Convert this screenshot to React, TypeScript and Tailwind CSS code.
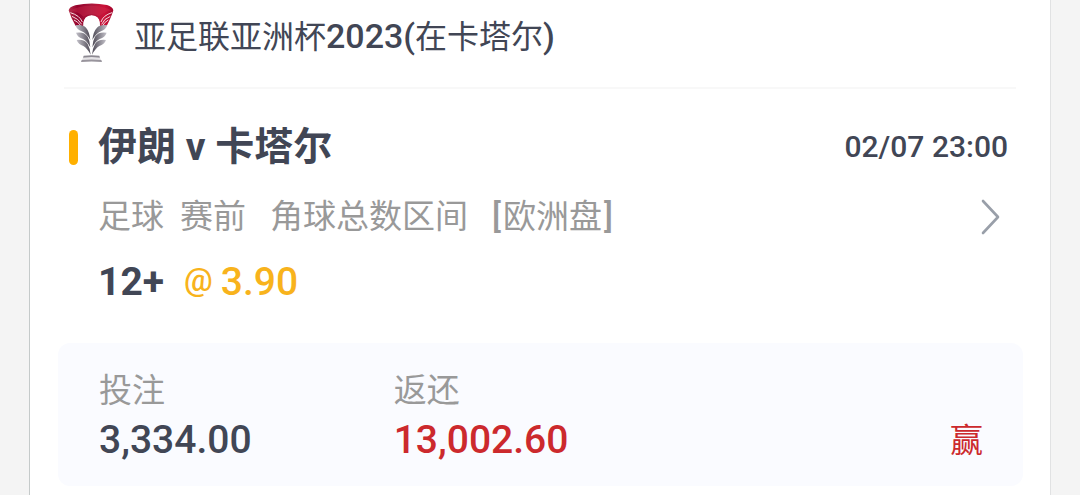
import { ReactNode } from "react";

function TrophyIcon() {
  return (
    <svg viewBox="39 9 138 180" className="h-15 w-[46px] shrink-0" role="img" aria-label="亚洲杯">
      <defs>
        <linearGradient id="bowl" x1="0" x2="1" y1="0" y2="0">
          <stop offset="0" stopColor="#b5304c" />
          <stop offset="0.2" stopColor="#94002b" />
          <stop offset="0.5" stopColor="#a8193c" />
          <stop offset="0.8" stopColor="#cb1238" />
          <stop offset="1" stopColor="#a3052c" />
        </linearGradient>
        <linearGradient id="feather" x1="0" x2="1" y1="0" y2="0">
          <stop offset="0" stopColor="#c4c2ca" />
          <stop offset="1" stopColor="#4d4955" />
        </linearGradient>
        <linearGradient id="featherRight" x1="1" x2="0" y1="0" y2="0">
          <stop offset="0" stopColor="#c4c2ca" />
          <stop offset="1" stopColor="#4d4955" />
        </linearGradient>
      </defs>
      <path
        d="M41 31 Q43 21 61 16 Q108 5 156 15 Q173 20 175 31 Q169 51 155 78 L135 84 Q138 50 110 47 Q81 50 85 84 L62 78 Q48 55 41 31Z"
        fill="url(#bowl)"
      />
      <path d="M47 31 Q69 17 108 17 Q147 17 169 31 Q144 38 132 49 Q121 42 109 42 Q96 42 86 50 Q71 37 47 31Z" fill="#cf2c4e" opacity="0.4" />
      <path d="M46 38 Q74 46 82 66 M51 49 Q71 56 80 73 M57 60 Q69 65 78 78" fill="none" stroke="#f4d7dd" strokeWidth="3" />
      <path d="M171 38 Q144 46 138 66 M166 49 Q147 56 140 73 M160 60 Q150 65 142 78" fill="none" stroke="#f4d7dd" strokeWidth="3" />
      <path d="M110 46 Q134 48 134 70 Q132 86 118 98 L114 160 H106 L102 98 Q88 86 86 70 Q86 48 110 46Z" fill="#fff" />
      <g fill="url(#feather)">
        <path d="M61 76 Q84 73 93 83 Q103 94 106 120 Q95 100 80 94 Q66 89 61 76Z" />
        <path d="M63 98 Q88 94 98 110 Q105 122 106 142 Q96 123 84 117 Q68 112 63 98Z" />
        <path d="M65 120 Q88 117 98 132 Q105 145 107 164 Q96 144 85 138 Q70 134 65 120Z" />
      </g>
      <g fill="url(#featherRight)">
        <path d="M157 76 Q135 73 126 83 Q115 94 112 120 Q123 100 138 94 Q152 89 157 76Z" />
        <path d="M155 98 Q130 94 120 110 Q113 122 112 142 Q122 123 134 117 Q150 112 155 98Z" />
        <path d="M153 120 Q130 117 120 132 Q113 145 111 164 Q122 144 133 138 Q148 134 153 120Z" />
      </g>
      <path d="M86 167 Q110 164 133 167 L135 173 Q110 170 84 173Z" fill="#8d8992" />
      <path d="M84 174 L135 174 L139 181 H80Z" fill="#e5e3e6" />
      <path d="M80 180 Q110 177 139 180 L141 186 Q110 183 78 186Z" fill="#98949c" />
    </svg>
  );
}

function Figure({ label, children }: { label: string; children: ReactNode }) {
  return (
    <div>
      <dt className="text-[33px] leading-12 text-[#999999]">{label}</dt>
      <dd className="text-[39px] leading-[50px] font-medium">{children}</dd>
    </div>
  );
}

export default function App() {
  return (
    <main className="min-h-screen bg-[#f4f4f4] px-[29px] font-[Roboto,'Noto_Sans_CJK_SC',sans-serif] text-[#414655]">
      <article className="min-h-screen border-x border-l-[#c5caca] border-r-[#e1e2e3] bg-white px-7 pb-2">
        <header className="mx-1.5 flex items-center gap-5 border-b-2 border-[#f8f8f8] pt-[3px] pb-6 pl-1">
          <TrophyIcon />
          <h1 className="pt-1.5 text-[32px] leading-12">
            亚足联亚洲杯<span className="text-[34px] font-medium">2023(</span>在卡塔尔<span className="text-[34px] font-medium">)</span>
          </h1>
        </header>

        <section className="pt-[33px] pr-2.5 pl-[11px]">
          <div className="flex items-center">
            <span className="h-[35px] w-[9px] rounded-full bg-[#ffb000]" />
            <h2 className="ml-5 text-[39px] leading-[50px] font-bold">伊朗 v 卡塔尔</h2>
            <time className="mr-1 ml-auto text-[30px] leading-[50px] font-medium" dateTime="02-07T23:00">
              02/07 23:00
            </time>
          </div>
          <div className="mt-[21px] flex items-center pl-[29px] text-[33px] leading-12 text-[#999999]">
            <span>足球</span>
            <span className="ml-4">赛前</span>
            <span className="ml-6">角球总数区间</span>
            <span className="ml-6 flex gap-0.5">
              <span className="font-medium">[</span>欧洲盘<span className="font-medium">]</span>
            </span>
            <button type="button" aria-label="查看详情" className="mr-3 ml-auto">
              <svg viewBox="0 0 20 36" className="h-9 w-5" fill="none" stroke="#999fa9" strokeWidth="2.6" strokeLinecap="round" strokeLinejoin="round">
                <path d="M3 2 L18 18 L3 34" />
              </svg>
            </button>
          </div>
          <p className="mt-4 flex items-center gap-5 pl-[29px] text-[39px] leading-[50px]">
            <strong className="font-bold">12+</strong>
            <span className="flex items-center gap-2 font-medium text-[#f8b31c]">
              <span className="pb-1 text-[32px] leading-none">@</span>
              <span>3.90</span>
            </span>
          </p>
        </section>

        <section className="mt-9 mr-[-1px] rounded-xl bg-[#fafbff] pt-6 pr-10 pb-[21px] pl-[41px]">
          <div className="grid grid-cols-3 items-end">
            <dl className="col-span-2 grid grid-cols-2">
              <Figure label="投注">3,334.00</Figure>
              <Figure label="返还">
                <span className="text-[#cc292d]">13,002.60</span>
              </Figure>
            </dl>
            <p className="text-right text-[33px] leading-12 text-[#cc292d]">赢</p>
          </div>
        </section>
      </article>
    </main>
  );
}
